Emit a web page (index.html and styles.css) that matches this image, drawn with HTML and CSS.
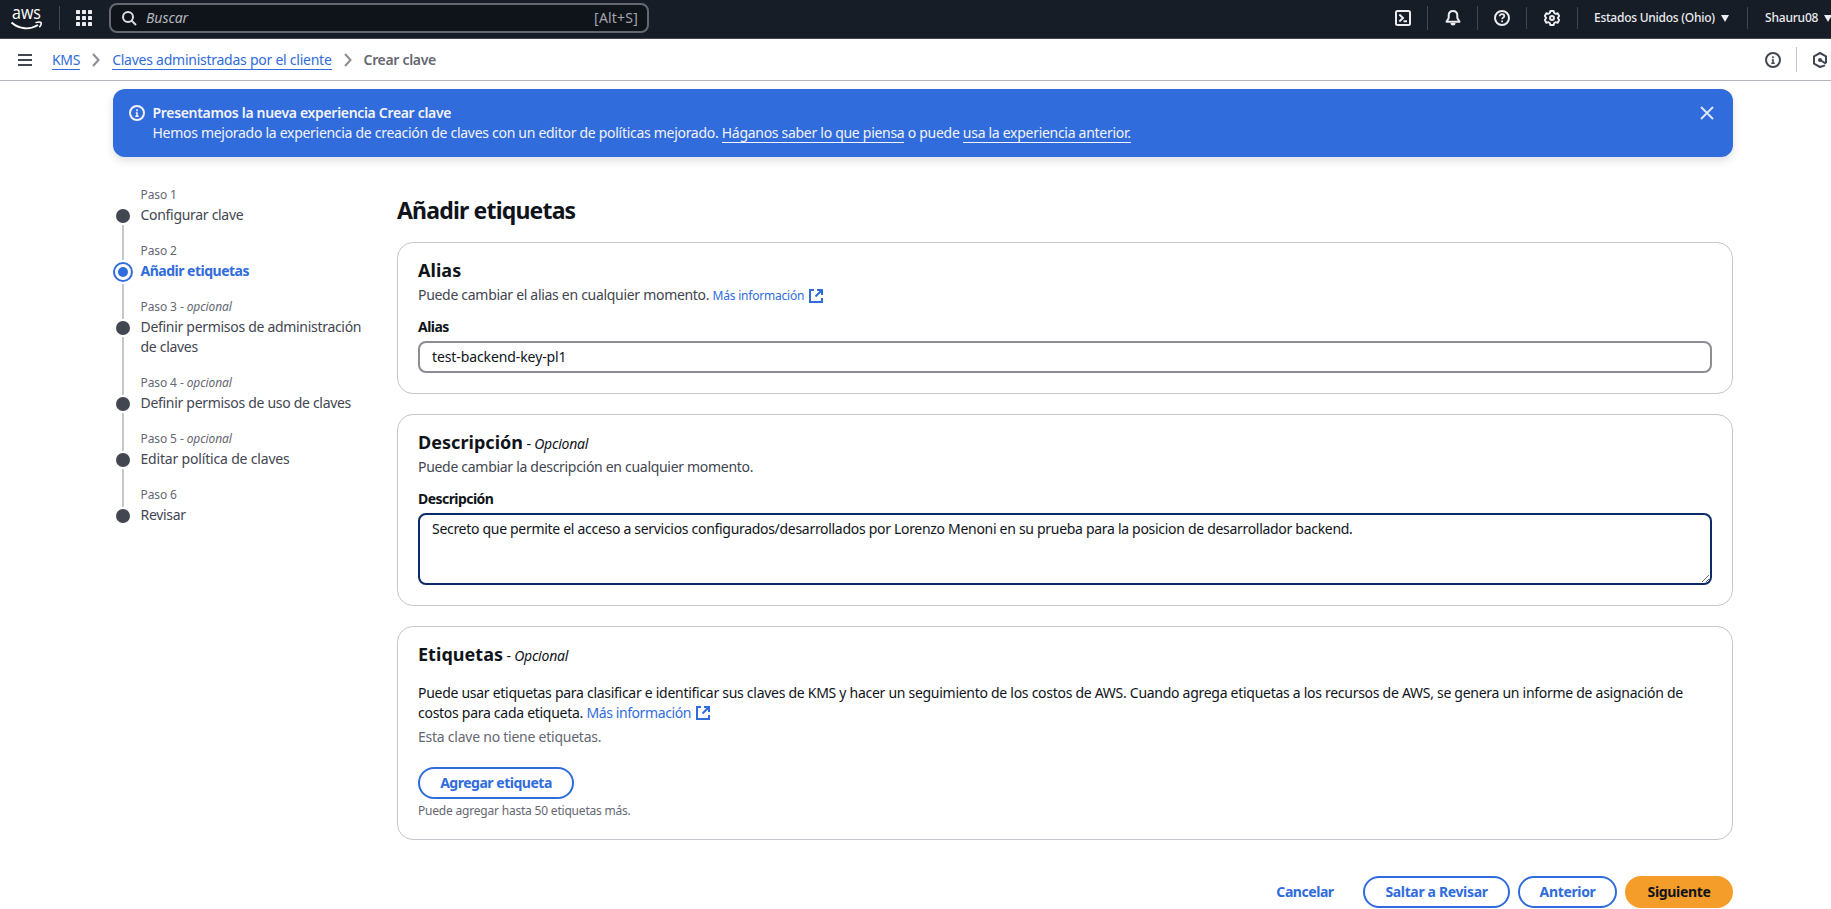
FILE: index.html
```
<!DOCTYPE html>
<html lang="es">
<head>
<meta charset="utf-8">
<title>Crear clave | KMS</title>
<link rel="stylesheet" href="styles.css">
</head>
<body>
<svg class="defs" width="0" height="0" aria-hidden="true">
  <symbol id="info" viewBox="0 0 16 16"><circle cx="8" cy="8" r="7" fill="none" stroke="currentColor" stroke-width="2"/><path d="M8 11V8H6.8M6.3 11.2h3.4M8 4.2v2" fill="none" stroke="currentColor" stroke-width="1.6"/></symbol>
  <symbol id="external" viewBox="0 0 14 14"><path d="M5 1H1v12h12V9M8 1h5v5M13 1L6.5 7.5" fill="none" stroke="currentColor" stroke-width="2"/></symbol>
</svg>
<header class="topbar">
  <a class="logo"><svg width="34" height="30" viewBox="0 -6 34 30"><text class="logo-text" x="2" y="13" textLength="29" lengthAdjust="spacingAndGlyphs">aws</text><path d="M1.5 16.5C9.500 23.500 20 24 28 19" fill="none" stroke="#fff" stroke-width="1.900"/><path d="M25.500 16.600C28 15.800 30 15.700 31 16.300C31.500 17.500 30.800 19.700 29.300 21.200" fill="none" stroke="#fff" stroke-width="1.500"/></svg></a>
  <i class="vline logo-line"></i>
  <svg class="apps" width="16" height="16" viewBox="0 0 16 16" fill="#ebebf0"><rect width="4" height="4" rx=".6"/><rect x="6" width="4" height="4" rx=".6"/><rect x="12" width="4" height="4" rx=".6"/><rect y="6" width="4" height="4" rx=".6"/><rect x="6" y="6" width="4" height="4" rx=".6"/><rect x="12" y="6" width="4" height="4" rx=".6"/><rect y="12" width="4" height="4" rx=".6"/><rect x="6" y="12" width="4" height="4" rx=".6"/><rect x="12" y="12" width="4" height="4" rx=".6"/></svg>
  <div class="search">
    <svg width="15" height="15" viewBox="0 0 15 15" fill="none" stroke="#dedee3" stroke-width="2"><circle cx="6" cy="6" r="5"/><path d="M9.600 9.600L14 14"/></svg>
    <span class="search-hint">Buscar</span><span class="search-key">[Alt+S]</span>
  </div>
  <div class="tools">
    <span class="tool"><svg width="16" height="16" viewBox="0 0 16 16" fill="none" stroke="currentColor" stroke-width="2"><rect x="1" y="1" width="14" height="14" rx="1.500"/><path d="M4.300 4.500L8 8l-3.700 3.500M8.500 11.300H12"/></svg></span>
    <span class="tool"><svg width="16" height="16" viewBox="0 0 16 16" fill="none" stroke="currentColor" stroke-width="2" stroke-linejoin="round"><path d="M8 1C5.200 1 3.700 3 3.700 5.500V8L1.500 11.700h13L12.300 8V5.500C12.300 3 10.800 1 8 1z"/><path d="M5.500 13a2.500 2.500 0 0 0 5 0z" fill="currentColor" stroke="none"/></svg></span>
    <span class="tool tool-help"><svg width="16" height="16" viewBox="0 0 16 16" fill="none" stroke="currentColor" stroke-width="2"><circle cx="8" cy="8" r="7"/><path d="M5.700 6.300C5.700 4.900 6.700 4.200 8 4.200s2.300.8 2.300 2S8.100 7.700 8.100 9.300M8.100 10.500v1.800" stroke-width="1.700"/></svg></span>
    <span class="tool tool-settings"><svg width="16" height="16" viewBox="0 0 16 16" fill="none" stroke="currentColor" stroke-width="1.900" stroke-linejoin="round"><path d="M6.300 1h3.400l.5 2 1.500.8 2-.6 1.500 2.800L13.800 8l1.400 2-1.500 2.800-2-.6-1.500.8-.5 2H6.300l-.5-2-1.500-.8-2 .6L.8 10l1.400-2L.8 6l1.500-2.800 2 .6L5.800 3z"/><circle cx="8" cy="8" r="2"/></svg></span>
    <span class="menu region">Estados Unidos (Ohio)<i class="caret"></i></span>
    <span class="menu user">Shauru08<i class="caret"></i></span>
  </div>
</header>
<nav class="crumbs">
  <svg class="burger" width="14" height="12" viewBox="0 0 14 12" fill="#424650"><path d="M0 0h14v2H0zM0 5h14v2H0zM0 10h14v2H0z"/></svg>
  <a class="crumb">KMS</a>
  <svg class="chev" width="8" height="14" viewBox="0 0 8 14"><path d="M1 1l5.500 6L1 13" fill="none" stroke="#8c8c94" stroke-width="2"/></svg>
  <a class="crumb crumb-list">Claves administradas por el cliente</a>
  <svg class="chev" width="8" height="14" viewBox="0 0 8 14"><path d="M1 1l5.500 6L1 13" fill="none" stroke="#8c8c94" stroke-width="2"/></svg>
  <b class="current">Crear clave</b>
  <div class="panels">
    <svg width="16" height="16"><use href="#info"/></svg>
    <i class="panel-line"></i>
    <svg width="16" height="16" viewBox="0 0 16 16" fill="none" stroke="currentColor" stroke-width="2" stroke-linejoin="round"><path d="M13 13.400L8 15 2 11.700V4.300L8 1l6 3.300v6.900M8 8l6 3.600"/><circle cx="8" cy="8" r="2" fill="currentColor" stroke="none"/></svg>
  </div>
</nav>
<div class="page">
  <section class="banner">
    <svg class="banner-icon" width="16" height="16"><use href="#info"/></svg>
    <div class="banner-text"><b>Presentamos la nueva experiencia Crear clave</b><p>Hemos mejorado la experiencia de creación de claves con un editor de políticas mejorado. <a>Háganos saber lo que piensa</a> o puede <a>usa la experiencia anterior.</a></p></div>
    <svg class="close" width="14" height="14" viewBox="0 0 14 14"><path d="M1 1l12 12M13 1L1 13" stroke="#dfe6f6" stroke-width="1.900"/></svg>
  </section>
  <div class="columns">
    <ol class="steps">
      <li class="step"><span class="step-no">Paso 1</span><span class="mark"><i class="dot"></i></span><span class="step-name">Configurar clave</span></li>
      <li class="step active"><span class="step-no">Paso 2</span><span class="mark"><i class="dot"></i></span><span class="step-name">Añadir etiquetas</span></li>
      <li class="step"><span class="step-no">Paso 3 - <em>opcional</em></span><span class="mark"><i class="dot"></i></span><span class="step-name">Definir permisos de administración de claves</span></li>
      <li class="step"><span class="step-no">Paso 4 - <em>opcional</em></span><span class="mark"><i class="dot"></i></span><span class="step-name">Definir permisos de uso de claves</span></li>
      <li class="step"><span class="step-no">Paso 5 - <em>opcional</em></span><span class="mark"><i class="dot"></i></span><span class="step-name step-policy">Editar política de claves</span></li>
      <li class="step"><span class="step-no">Paso 6</span><span class="mark"><i class="dot"></i></span><span class="step-name">Revisar</span></li>
    </ol>
    <main class="main">
      <h1>Añadir etiquetas</h1>
      <section class="card">
        <h2>Alias</h2>
        <p class="desc">Puede cambiar el alias en cualquier momento. <a class="link small">Más información<svg class="ext" width="14" height="14"><use href="#external"/></svg></a></p>
        <label class="label" for="alias">Alias</label>
        <input class="field" id="alias" value="test-backend-key-pl1">
      </section>
      <section class="card">
        <h2>Descripción<span class="optional"> - <em>Opcional</em></span></h2>
        <p class="desc">Puede cambiar la descripción en cualquier momento.</p>
        <label class="label" for="desc">Descripción</label>
        <textarea class="field area" id="desc" spellcheck="false">Secreto que permite el acceso a servicios configurados/desarrollados por Lorenzo Menoni en su prueba para la posicion de desarrollador backend.</textarea>
      </section>
      <section class="card">
        <h2>Etiquetas<span class="optional"> - <em>Opcional</em></span></h2>
        <p class="about">Puede usar etiquetas para clasificar e identificar sus claves de KMS y hacer un seguimiento de los costos de AWS. Cuando agrega etiquetas a los recursos de AWS, se genera un informe de asignación de costos para cada etiqueta. <a class="link">Más información<svg class="ext" width="14" height="14"><use href="#external"/></svg></a></p>
        <p class="empty">Esta clave no tiene etiquetas.</p>
        <button class="btn add">Agregar etiqueta</button>
        <p class="hint">Puede agregar hasta 50 etiquetas más.</p>
      </section>
      <footer class="actions">
        <button class="btn plain">Cancelar</button>
        <button class="btn skip">Saltar a Revisar</button>
        <button class="btn prev">Anterior</button>
        <button class="btn primary">Siguiente</button>
      </footer>
    </main>
  </div>
</div>
</body>
</html>
```
FILE: styles.css
```
* { box-sizing: border-box; }
body {
  margin: 0;
  height: 909px;
  overflow: hidden;
  background: #fff;
  color: #0f141a;
  font: 14px/20px "Noto Sans", "Open Sans", sans-serif;
  letter-spacing: -0.3px;
}
p, h1, h2, ol { margin: 0; padding: 0; }
svg { display: block; flex: none; }
.defs { position: absolute; }

.topbar {
  display: flex;
  align-items: center;
  height: 39px;
  padding: 0 0 7px 10px;
  background: #161d26;
  border-bottom: 1px solid #424650;
  color: #ebebf0;
  overflow: hidden;
}
.logo { flex: none; margin-top: -1px; }
.logo-text { font: 500 18px "Open Sans", sans-serif; fill: #fff; letter-spacing: 0; }
.vline { flex: none; width: 1px; height: 24px; background: #424650; }
.logo-line { margin: 5px 16px 0 15px; }
.apps { margin-top: 5px; }
.search {
  display: flex;
  align-items: center;
  flex: none;
  width: 540px;
  height: 30px;
  margin: 5px 0 0 17px;
  padding: 0 9px 0 11px;
  background: #0f141a;
  border: 2px solid #656871;
  border-radius: 8px;
}
.search-hint { margin-left: 9px; font-style: italic; color: #b4b4bb; letter-spacing: -0.05px; }
.search-key { margin-left: auto; color: #a4a4ad; letter-spacing: 0.2px; }
.tools { display: flex; align-items: center; flex: none; margin: 5px 0 0 729px; }
.tool {
  display: flex;
  align-items: center;
  justify-content: center;
  flex: none;
  width: 50px;
  height: 24px;
  border-right: 1px solid #424650;
}
.tool-help { width: 49px; height: 22px; }
.tool-settings { width: 51px; height: 22px; padding-right: 1px; }
.menu { display: flex; align-items: center; flex: none; height: 22px; font-size: 12px; font-weight: 500; white-space: nowrap; }
.region { width: 170px; padding-left: 16px; border-right: 1px solid #424650; letter-spacing: -0.25px; }
.user { padding-left: 17px; letter-spacing: -0.2px; }
.caret { margin-left: 6px; border: 4px solid transparent; border-top: 7px solid #ebebf0; border-bottom: 0; }

.crumbs {
  display: flex;
  align-items: center;
  height: 42px;
  padding-left: 18px;
  border-bottom: 1px solid #b4b4bb;
}
.burger { margin-right: 20px; }
.crumb { color: #306cdc; border-bottom: 1px solid #306cdc; line-height: 19px; }
.crumb-list { letter-spacing: -0.25px; }
.chev { margin: 0 12px; }
.current { font-weight: 600; color: #656871; letter-spacing: -0.32px; }
.panels { display: flex; align-items: center; margin-left: auto; margin-right: 3px; color: #424650; }
.panel-line { width: 1px; height: 25px; margin: 0 15px; background: #c6c6cd; }

.page { width: 1620px; margin: 8px 0 0 113px; }
.banner {
  display: flex;
  align-items: flex-start;
  height: 68px;
  padding: 14px 19px 0 16px;
  background: #306cdc;
  border-radius: 12px;
  box-shadow: 0 4px 8px rgba(0, 7, 22, 0.12);
  color: #f3f3f7;
}
.banner-icon { margin-top: 2px; }
.banner-text { flex: 1; margin-left: 7.5px; letter-spacing: -0.29px; }
.banner-text b { display: block; font-weight: 600; letter-spacing: -0.32px; }
.banner-text a { border-bottom: 1px solid #f3f3f7; }
.close { margin-top: 3px; }

.columns { display: flex; padding-top: 30px; }
.steps { width: 284px; list-style: none; color: #424650; }
.step { display: grid; grid-template-columns: 20px 228px; column-gap: 7.5px; row-gap: 2px; position: relative; padding-bottom: 18px; }
.step-no { grid-column: 2; height: 16px; font-size: 12px; line-height: 16px; color: #656871; letter-spacing: -0.1px; }
.step-policy { letter-spacing: -0.18px; }
.mark { display: flex; justify-content: center; height: 20px; padding-top: 4px; }
.dot { flex: none; width: 14px; height: 14px; border-radius: 50%; background: #424650; }
.step:not(:last-child)::after {
  content: "";
  position: absolute;
  left: 9px;
  top: 38px;
  bottom: -20px;
  width: 2px;
  background: #c6c6cd;
}
.step:nth-child(2)::after { top: 41px; }
.step:first-child::after { bottom: -17px; }
.active .step-name { font-weight: 700; color: #306cdc; letter-spacing: -0.5px; }
.active .mark { padding-top: 1px; }
.active .dot { width: 20px; height: 20px; border: 2px solid #306cdc; background: #306cdc; background-clip: content-box; padding: 3px; }

.main { width: 1336px; padding-top: 8px; }
h1 { margin-bottom: 17px; font-size: 23px; font-weight: 700; line-height: 30px; letter-spacing: -0.82px; }
.card { margin-bottom: 20px; padding: 16px 20px 20px; border: 1px solid #c6c6cd; border-radius: 16px; }
h2 { height: 22px; font-size: 18px; font-weight: 700; line-height: 22px; letter-spacing: 0.04px; }
.optional { font-size: 14px; font-weight: 400; line-height: 14px; letter-spacing: -0.22px; }
.desc { margin-top: 4px; color: #424650; }
.link { color: #306cdc; letter-spacing: -0.4px; }
.small { font-size: 12px; line-height: 12px; letter-spacing: -0.22px; }
.ext { display: inline-block; margin: -3px 0 -3px 5px; vertical-align: 1px; }
.small .ext { margin-left: 4.5px; vertical-align: 0; }
.label { display: block; margin: 12px 0 4px; font-weight: 700; letter-spacing: -0.55px; }
.field {
  display: block;
  width: 1294px;
  height: 32px;
  padding: 0 12px 1px;
  border: 2px solid #8c8c94;
  border-radius: 8px;
  color: #0f141a;
  font: inherit;
  letter-spacing: -0.1px;
  outline: none;
}
.area { height: 72px; padding-top: 4px; border-color: #0b2c68; letter-spacing: -0.3px; resize: both; overflow: hidden; }
.about { margin-top: 18px; letter-spacing: -0.28px; }
.empty { margin-top: 4px; color: #656871; letter-spacing: -0.24px; }
.btn {
  height: 32px;
  padding: 0;
  border: 2px solid #306cdc;
  border-radius: 16px;
  background: #fff;
  color: #306cdc;
  font: 700 14px/20px "Noto Sans", sans-serif;
  letter-spacing: -0.35px;
}
.add { display: block; width: 156px; margin-top: 20px; letter-spacing: -0.48px; }
.hint { margin-top: 4px; color: #656871; font-size: 12px; line-height: 16px; letter-spacing: -0.2px; }
.actions { display: flex; justify-content: flex-end; gap: 8px; margin-top: 36px; }
.plain { width: 100px; border-color: transparent; letter-spacing: -0.45px; }
.skip { width: 147px; }
.prev { width: 99px; }
.primary { width: 108px; border-color: #f59d2a; background: #f59d2a; color: #0f141a; }
```
